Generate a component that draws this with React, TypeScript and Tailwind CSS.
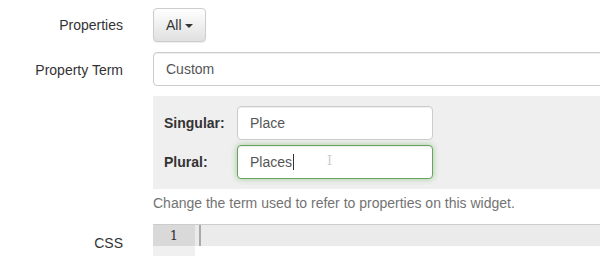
const FONT = { fontFamily: '"Liberation Sans", Arial, sans-serif' };

function Row({ label, top, children }: { label: string; top: string; children: React.ReactNode }) {
  return (
    <div className="flex">
      <div className={`w-[123px] shrink-0 text-right text-[14px] text-[#333] ${top}`}>{label}</div>
      <div className="ml-[30px] flex-1 min-w-0">{children}</div>
    </div>
  );
}

export default function App() {
  return (
    <div className="h-[256px] w-[600px] overflow-hidden bg-white" style={FONT}>
      <div className="w-[660px] pt-[8px]">
        <Row label="Properties" top="pt-[7px]">
          <button className="flex h-[34px] items-center gap-[3px] rounded-[4px] border border-[#ccc] bg-gradient-to-b from-white to-[#e0e0e0] px-[12px] text-[14px] text-[#333] shadow-[inset_0_1px_0_rgba(255,255,255,.15),0_1px_1px_rgba(0,0,0,.075)]">
            All
            <span className="mt-[1px] inline-block h-0 w-0 border-x-[4px] border-t-[4px] border-x-transparent border-t-[#333]" />
          </button>
        </Row>
        <div className="h-[10px]" />
        <Row label="Property Term" top="pt-[8px]">
          <div className="flex h-[34px] items-center rounded-[4px] border border-[#ccc] px-[12px] text-[14px] text-[#555] shadow-[inset_0_1px_1px_rgba(0,0,0,.075)]">
            Custom
          </div>
        </Row>
        <div className="h-[10px]" />
        <Row label="" top="">
          <div className="flex flex-col gap-[5px] bg-[#efefef] px-[11px] py-[10px]">
            <div className="flex items-center">
              <span className="w-[73px] text-[14px] font-bold text-[#333]">Singular:</span>
              <div className="flex h-[34px] w-[196px] items-center rounded-[4px] border border-[#ccc] bg-white px-[12px] text-[14px] text-[#555] shadow-[inset_0_1px_1px_rgba(0,0,0,.075)]">
                Place
              </div>
            </div>
            <div className="flex items-center">
              <span className="w-[73px] text-[14px] font-bold text-[#333]">Plural:</span>
              <div className="relative flex h-[34px] w-[196px] items-center rounded-[4px] border border-[#67a45e] bg-white px-[12px] text-[14px] text-[#555] shadow-[inset_0_1px_1px_rgba(0,0,0,.075),0_0_6px_#a4c99e]">
                Places<span className="ml-[1px] inline-block h-[16px] w-px bg-[#333]" />
                <span className="absolute left-[89px] top-[8px] text-[13px] leading-none text-[#ccc]" style={{ fontFamily: '"DejaVu Serif", serif' }}>I</span>
              </div>
            </div>
          </div>
          <p className="mt-[4px] text-[14px] text-[#737373]">Change the term used to refer to properties on this widget.</p>
        </Row>
        <div className="h-[10px]" />
        <Row label="CSS" top="pt-[9px]">
          <div className="flex border-t border-[#ccc]">
            <div className="w-[42px] shrink-0 bg-[#f0f0f0]">
              <div className="h-[21px] bg-[#d9d9d9] pr-[17px] text-right text-[13px] leading-[21px] text-[#333]" style={{ fontFamily: '"DejaVu Serif", serif' }}>1</div>
              <div className="h-[20px]" />
            </div>
            <div className="flex-1">
              <div className="flex h-[21px] bg-[#ebebeb]">
                <span className="ml-[4px] h-[21px] w-[2px] bg-[#aaa]" />
              </div>
            </div>
          </div>
        </Row>
      </div>
    </div>
  );
}
